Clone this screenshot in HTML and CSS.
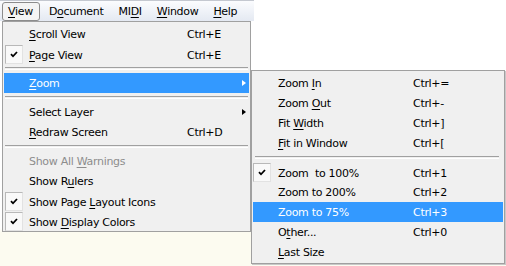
FILE: index.html
```html
<!DOCTYPE html>
<html>
<head>
  <meta charset="utf-8">
  <title>View menu</title>
  <link rel="stylesheet" href="styles.css">
</head>
<body>
  <div class="screen">
    <div class="menubar">
      <span class="bar-item open"><u>V</u>iew</span>
      <span class="bar-item">D<u>o</u>cument</span>
      <span class="bar-item">MI<u>D</u>I</span>
      <span class="bar-item"><u>W</u>indow</span>
      <span class="bar-item"><u>H</u>elp</span>
    </div>

    <div class="menu main">
      <div class="row"><span class="mark"></span><span class="label"><u>S</u>croll View</span><span class="key">Ctrl+E</span></div>
      <div class="row"><span class="mark checked"><svg width="8" height="7" viewBox="0 0 8 7"><path d="M1 3.2 L3 5.3 L7 1" /></svg></span><span class="label"><u>P</u>age View</span><span class="key">Ctrl+E</span></div>
      <div class="sep"></div>
      <div class="row hot"><span class="mark"></span><span class="label"><u>Z</u>oom</span><span class="key"></span><span class="arrow"></span></div>
      <div class="sep"></div>
      <div class="row"><span class="mark"></span><span class="label">Select Layer</span><span class="key"></span><span class="arrow"></span></div>
      <div class="row"><span class="mark"></span><span class="label"><u>R</u>edraw Screen</span><span class="key">Ctrl+D</span></div>
      <div class="sep"></div>
      <div class="row disabled"><span class="mark"></span><span class="label">Show All <u>W</u>arnings</span></div>
      <div class="row"><span class="mark"></span><span class="label">Show R<u>u</u>lers</span></div>
      <div class="row"><span class="mark checked"><svg width="8" height="7" viewBox="0 0 8 7"><path d="M1 3.2 L3 5.3 L7 1" /></svg></span><span class="label">Show Page <u>L</u>ayout Icons</span></div>
      <div class="row"><span class="mark checked"><svg width="8" height="7" viewBox="0 0 8 7"><path d="M1 3.2 L3 5.3 L7 1" /></svg></span><span class="label">Show <u>D</u>isplay Colors</span></div>
    </div>

    <div class="menu sub">
      <div class="row"><span class="mark"></span><span class="label">Zoom <u>I</u>n</span><span class="key">Ctrl+=</span></div>
      <div class="row"><span class="mark"></span><span class="label">Zoom <u>O</u>ut</span><span class="key">Ctrl+-</span></div>
      <div class="row"><span class="mark"></span><span class="label">Fit <u>W</u>idth</span><span class="key">Ctrl+]</span></div>
      <div class="row"><span class="mark"></span><span class="label"><u>F</u>it in Window</span><span class="key">Ctrl+[</span></div>
      <div class="sep"></div>
      <div class="row"><span class="mark checked"><svg width="8" height="7" viewBox="0 0 8 7"><path d="M1 3.2 L3 5.3 L7 1" /></svg></span><span class="label">Zoom&nbsp; to 100%</span><span class="key">Ctrl+1</span></div>
      <div class="row"><span class="mark"></span><span class="label">Zoom to 200%</span><span class="key">Ctrl+2</span></div>
      <div class="row hot"><span class="mark"></span><span class="label">Zoom to 75%</span><span class="key">Ctrl+3</span></div>
      <div class="row"><span class="mark"></span><span class="label">O<u>t</u>her...</span><span class="key">Ctrl+0</span></div>
      <div class="row"><span class="mark"></span><span class="label"><u>L</u>ast Size</span></div>
    </div>
  </div>
</body>
</html>
```

FILE: styles.css
```css
body {
  margin: 0;
  background: #fff;
  font-family: "DejaVu Sans", sans-serif;
  font-size: 11px;
  letter-spacing: -0.3px;
  color: #000;
}
.screen {
  position: relative;
  width: 506px;
  height: 266px;
  overflow: hidden;
  background: linear-gradient(to bottom, #fff 0, #fff 228px, #fcfbf0 232px);
}
u {
  text-decoration: underline;
  text-underline-offset: 2px;
}

/* menu bar */
.menubar {
  display: flex;
  align-items: center;
  width: 254px;
  height: 21px;
  padding-left: 2px;
  box-sizing: border-box;
  border-top: 1px solid #c4c8d0;
  background: linear-gradient(to bottom, #fbfcfe, #e4e9f2);
}
.bar-item {
  padding: 0 6px 0 7px;
  line-height: 17px;
  border: 1px solid transparent;
}
.bar-item.open {
  padding: 0 6px 0 5px;
  margin-right: 1px;
  border-color: #8c8c8c;
  border-radius: 3px;
  background: #f4f4f4;
}

/* drop-down panels */
.menu {
  position: absolute;
  background: #f0f0f0;
  border: 1px solid #a0a0a0;
  padding: 2px 0;
  box-sizing: border-box;
}
.menu.main {
  left: 2px;
  top: 21px;
  width: 249px;
  height: 211px;
}
.menu.sub {
  left: 251px;
  top: 70px;
  width: 254px;
  height: 194px;
  box-shadow: 1px 1px 0 #c8c8c8;
}
.row {
  display: grid;
  grid-template-columns: 25px 158px 55px 7px;
  align-items: center;
  height: 20px;
  padding-top: 1px;
  box-sizing: border-box;
  margin: 0 1px;
}
.sub .row {
  grid-template-columns: 25px 135px 1fr;
}
.row.hot {
  background: #3399ff;
  color: #fff;
}
.row.disabled {
  color: #8d8d8d;
}
.mark {
  height: 19px;
}
.mark.checked {
  display: flex;
  align-items: center;
  justify-content: center;
  width: 16px;
  height: 17px;
  margin-bottom: 1px;
  border: 1px solid #b8b8b8;
  border-right-color: #e2e2e2;
  border-bottom-color: #e2e2e2;
  background: #f9f9f9;
}
.main .mark.checked {
  margin-left: 1px;
}
.mark svg path {
  fill: none;
  stroke: #000;
  stroke-width: 1.8;
}
.label {
  white-space: nowrap;
}
.key {
  white-space: nowrap;
}
.arrow {
  width: 0;
  height: 0;
  margin-bottom: 1px;
  border-top: 3.5px solid transparent;
  border-bottom: 3.5px solid transparent;
  border-left: 4px solid #000;
}
.row.hot .arrow {
  border-left-color: #fff;
}
.sep {
  height: 1px;
  margin: 3px 2px;
  border-top: 1px solid #a0a0a0;
  border-bottom: 1px solid #fff;
}
.sub .sep {
  margin: 3px 5px 3px 3px;
}
```
